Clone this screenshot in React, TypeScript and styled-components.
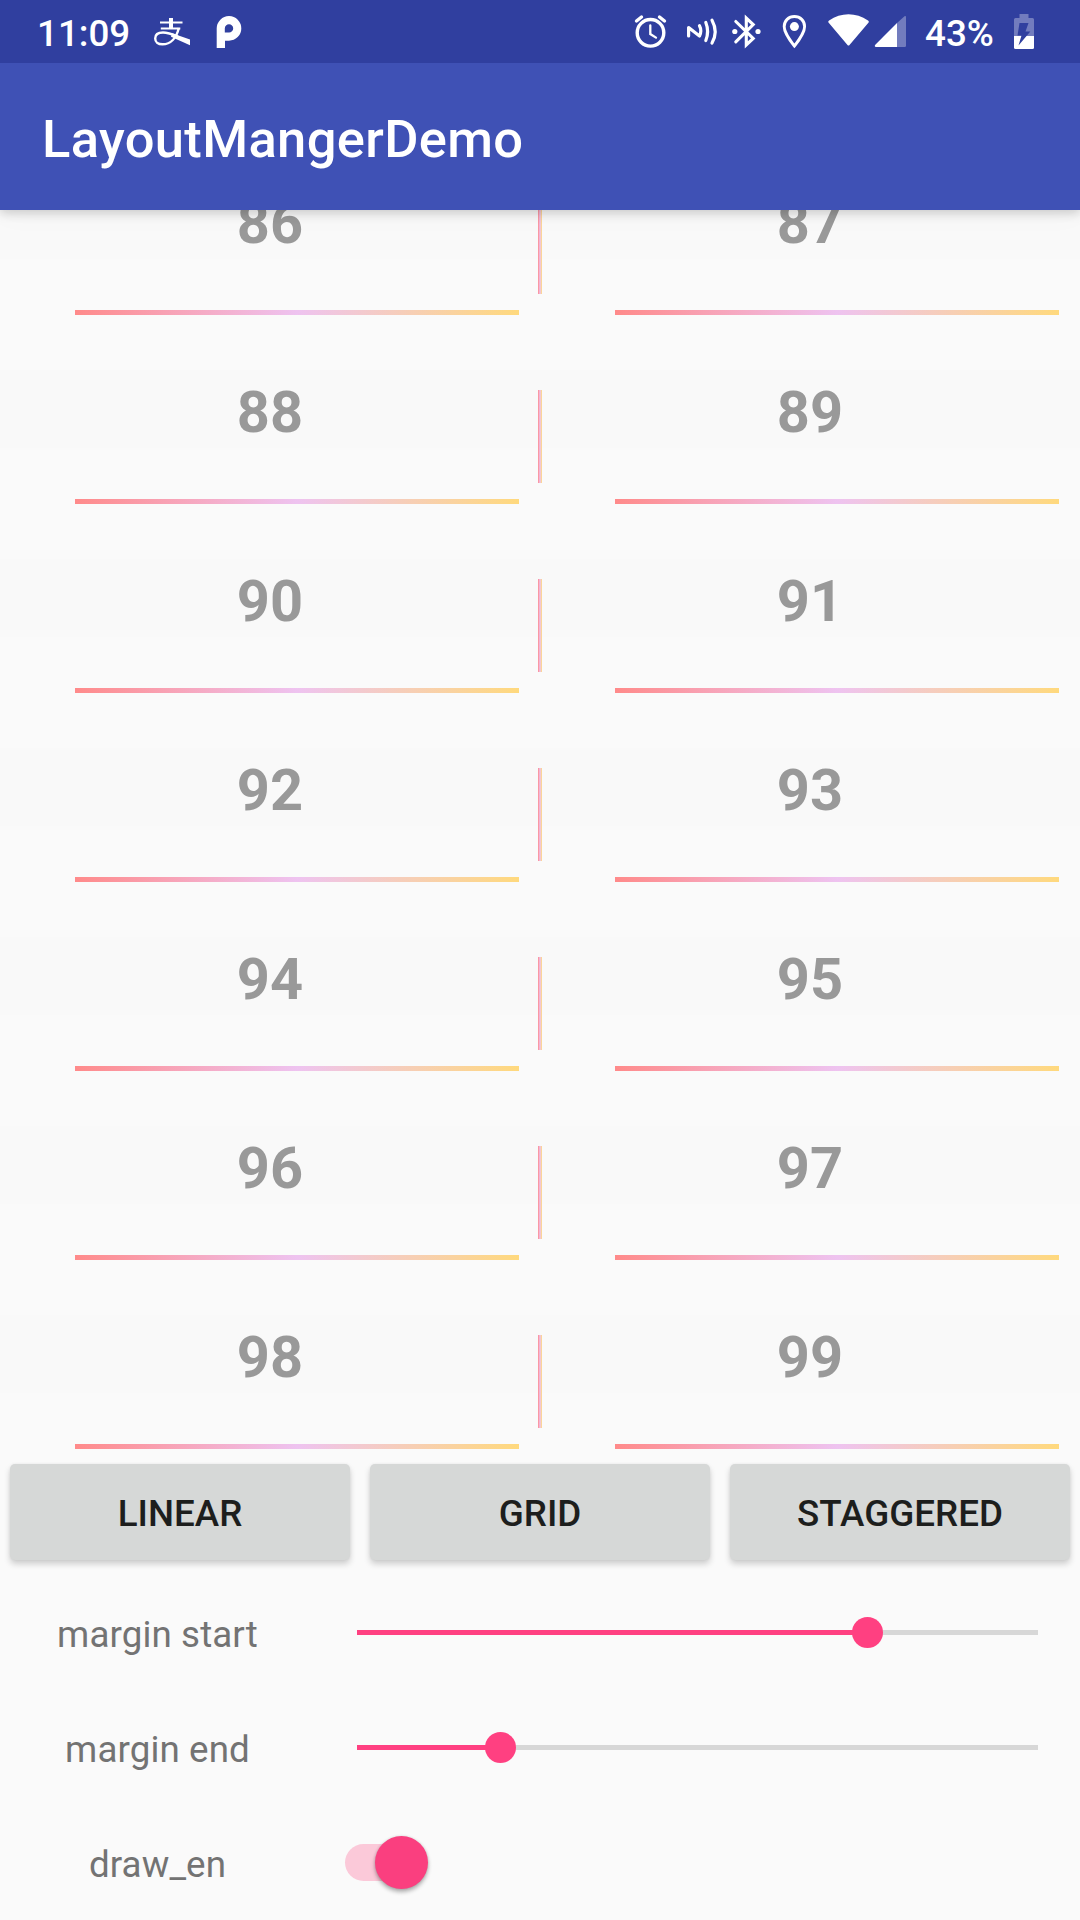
import React, { useState } from 'react';
import styled, { createGlobalStyle } from 'styled-components';

const GlobalStyle = createGlobalStyle`
  * { box-sizing: border-box; }
  body {
    margin: 0;
    background: #fafafa;
    font-family: Roboto, 'Liberation Sans', sans-serif;
  }
`;

const Screen = styled.div`
  display: flex;
  flex-direction: column;
  width: 1080px;
  height: 1920px;
  overflow: hidden;
  background: #fafafa;
`;

const StatusBar = styled.div`
  display: flex;
  justify-content: space-between;
  flex: none;
  height: 63px;
  padding: 0 46px 0 37px;
  background: #303f9f;
  color: #fff;
  z-index: 2;
`;

const StatusGroup = styled.div`
  display: flex;
  align-items: flex-start;
`;

const StatusText = styled.span<{ $width: number; $gap?: number }>`
  width: ${(p) => p.$width}px;
  margin-left: ${(p) => p.$gap ?? 0}px;
  font-size: 36.75px;
  font-weight: 500;
  line-height: 67px;
  white-space: nowrap;
`;

const StatusIcon = styled.svg<{ $gap: number }>`
  flex: none;
  height: 63px;
  margin-left: ${(p) => p.$gap}px;
  overflow: visible;
`;

const AppBar = styled.header`
  display: flex;
  align-items: center;
  flex: none;
  height: 147px;
  padding: 5px 42px 0;
  background: #3f51b5;
  box-shadow: 0 3px 10px rgba(0, 0, 0, 0.18), 0 1px 30px rgba(0, 0, 0, 0.04);
  z-index: 1;
`;

const Title = styled.h1`
  margin: 0;
  font-size: 52.5px;
  font-weight: 500;
  line-height: 62px;
  letter-spacing: 0.35px;
  color: #fff;
`;

const List = styled.div`
  flex: none;
  height: 1244px;
  overflow: hidden;
`;

const ListRows = styled.div`
  margin-top: -84px;
`;

const ListRow = styled.div`
  display: grid;
  grid-template-columns: 538px 4px 538px;
  height: 189px;
  padding-top: 75px;
  background: linear-gradient(#fafafa 55px, #f9f9f9 55px 133px, #fafafa 133px);
`;

const Cell = styled.div<{ $side: 'left' | 'right' }>`
  display: flex;
  flex-direction: column;
  justify-content: space-between;
  padding: ${(p) => (p.$side === 'left' ? '0 19px 0 75px' : '0 21px 0 73px')};
`;

const CellNumber = styled.div<{ $side: 'left' | 'right' }>`
  margin: ${(p) => (p.$side === 'left' ? '0 -21px 0 -75px' : '0 -21px 0 -75px')};
  font-size: 57.75px;
  font-weight: 700;
  line-height: 44px;
  text-align: center;
  color: #999;
`;

const gradient = 'linear-gradient(to right, #ff8a8a, #eec3f0 50%, #ffd97d)';

const BottomLine = styled.div`
  height: 5px;
  background: ${gradient};
`;

const SideLine = styled.div`
  height: 93px;
  background: ${gradient};
`;

const ButtonBar = styled.div`
  display: flex;
  gap: 20px;
  flex: none;
  padding: 10px 10px 0;
`;

const ModeButton = styled.button`
  flex: 1;
  height: 96px;
  padding: 3px 0 0;
  border: 0;
  border-radius: 5px;
  background: #d6d8d7;
  box-shadow: 0 4px 6px rgba(0, 0, 0, 0.18), 0 0 3px rgba(0, 0, 0, 0.06);
  font: 500 36.75px/44px Roboto, 'Liberation Sans', sans-serif;
  color: #1d1e1d;
`;

const Settings = styled.div`
  display: flex;
  flex-direction: column;
  flex: none;
  padding-top: 15px;
`;

const SettingRow = styled.div`
  display: grid;
  grid-template-columns: 315px 1fr;
  align-items: center;
  height: 115px;
`;

const Label = styled.span`
  padding-top: 4px;
  font-size: 36.75px;
  line-height: 44px;
  letter-spacing: 0.1px;
  text-align: center;
  color: #737373;
`;

const Slider = styled.div`
  position: relative;
  height: 5px;
  margin: 0 42px;
  background: #d7d7d7;
`;

const SliderFill = styled.div`
  height: 100%;
  background: #ff4081;
`;

const SliderThumb = styled.div`
  position: absolute;
  top: -13px;
  width: 31px;
  height: 31px;
  margin-left: -15.5px;
  border-radius: 50%;
  background: #ff4081;
`;

const Switch = styled.button<{ $on: boolean }>`
  display: flex;
  align-items: center;
  justify-content: ${(p) => (p.$on ? 'flex-end' : 'flex-start')};
  width: 75px;
  height: 37px;
  margin-left: 30px;
  padding: 0;
  border: 0;
  border-radius: 19px;
  background: ${(p) => (p.$on ? '#fbc9d9' : '#c4c4c4')};
`;

const SwitchThumb = styled.span`
  width: 53px;
  height: 53px;
  margin: 0 -8px;
  flex: none;
  border-radius: 50%;
  background: #fa3f7f;
  box-shadow: 0 3px 4px rgba(0, 0, 0, 0.3), 0 0 3px rgba(0, 0, 0, 0.12);
`;

const rows = [86, 88, 90, 92, 94, 96, 98];

function NotificationIcons() {
  return (
    <>
      <StatusIcon $gap={25} width="36" viewBox="154 0 36 63" fill="none" stroke="#fff">
        <path d="M160 22.500h22.500M160.800 28.500h19.500" strokeWidth="2.200" />
        <path d="M171 18v11" strokeWidth="4" />
        <path
          d="M178.800 28C176.500 38 170.500 44.300 162.500 44.300C158 44.300 155.200 42 155.200 38.500C155.200 34.500 158.500 32.500 163 32.500C168 32.500 173 34.500 178 36.500"
          strokeWidth="2.400"
        />
        <path d="M172 33.300L190 39.600V45.200L171 36.700Z" fill="#fff" stroke="none" />
      </StatusIcon>
      <StatusIcon $gap={27} width="25" viewBox="217 0 25 63">
        <path
          fill="#fff"
          fillRule="evenodd"
          d="M216.700 28.300A12.300 12.300 0 1 1 229 40.700H225V48H216.700ZM224.800 32.600H229A4.200 4.200 0 1 0 224.800 28.400Z"
        />
      </StatusIcon>
    </>
  );
}

function SystemIcons() {
  return (
    <>
      <StatusIcon $gap={0} width="32" viewBox="635 0 32 63" fill="none" stroke="#fff" strokeLinecap="round">
        <circle cx="650.500" cy="32.800" r="13.300" strokeWidth="3.400" />
        <path d="M636.500 21L641.500 17M664.500 21L659.500 17" strokeWidth="3.400" />
        <path d="M650.300 25.500V34L656 37.600" strokeWidth="2.300" />
      </StatusIcon>
      <StatusIcon
        $gap={20}
        width="30"
        viewBox="687 0 30 63"
        fill="none"
        stroke="#fff"
        strokeWidth="3.200"
        strokeLinecap="round"
        strokeLinejoin="round"
      >
        <path d="M688.600 36V27.500L699.500 36C701.200 32.500 701.200 29 699.500 25.700" />
        <path d="M705.800 22.500C708.200 28.500 708.200 34.500 705.800 40.500" />
        <path d="M712 20.200C716.300 28 716.300 35.500 712 43" />
      </StatusIcon>
      <StatusIcon $gap={15} width="29" viewBox="732 0 29 63" fill="none" stroke="#fff" strokeWidth="3.100">
        <path d="M735.800 21.500L753.200 38.500L746.300 45V18L753.200 24.500L735.800 41.800" strokeLinecap="round" />
        <circle cx="734.800" cy="31.500" r="2.600" fill="#fff" stroke="none" />
        <circle cx="758" cy="31.500" r="2.600" fill="#fff" stroke="none" />
      </StatusIcon>
      <StatusIcon $gap={22} width="23" viewBox="783 0 23 63">
        <path
          d="M794.400 16.500C788.500 16.500 784.200 20.800 784.200 26.500C784.200 33.500 794.400 46 794.400 46C794.400 46 804.600 33.500 804.600 26.500C804.600 20.800 800.300 16.500 794.400 16.500Z"
          fill="none"
          stroke="#fff"
          strokeWidth="2.900"
        />
        <circle cx="794.400" cy="26.600" r="4.500" fill="#fff" />
      </StatusIcon>
      <StatusIcon $gap={22} width="41" viewBox="828 0 41 63">
        <path
          d="M828.700 22.800C828 21.900 828.200 21 829.100 20.400C841 12.200 856 12.200 868 20.400C868.900 21 869.100 21.900 868.400 22.800L849.500 45C848.900 45.700 848.100 45.700 847.500 45Z"
          fill="#fff"
        />
      </StatusIcon>
      <StatusIcon $gap={6} width="31" viewBox="875 0 31 63">
        <path
          d="M897 23V47H904.700Q906 47 906 45.700V17.200Q906 15.300 904.500 16.300Z"
          fill="#fff"
          fillOpacity="0.320"
        />
        <path d="M897 23V47H876Q874 46.500 875.300 44.700Z" fill="#fff" />
      </StatusIcon>
    </>
  );
}

function BatteryIcon() {
  return (
    <StatusIcon $gap={21} width="20" viewBox="1014 0 20 63">
      <path
        d="M1019.500 14H1028.500V18H1032.500Q1034 18 1034 19.500V36H1014V19.500Q1014 18 1015.500 18H1019.500Z"
        fill="#fff"
        fillOpacity="0.320"
      />
      <path d="M1014 36H1034V47.500Q1034 49 1032.500 49H1015.500Q1014 49 1014 47.500Z" fill="#fff" />
      <path d="M1019.500 23H1028.500L1025.500 31.500H1030.300L1018.500 45.500L1021.500 35.500H1017.500Z" fill="#303f9f" />
    </StatusIcon>
  );
}

function SliderSetting({ label, value }: { label: string; value: number }) {
  return (
    <SettingRow>
      <Label>{label}</Label>
      <Slider role="slider" aria-valuenow={Math.round(value)} aria-label={label}>
        <SliderFill style={{ width: `${value}%` }} />
        <SliderThumb style={{ left: `${value}%` }} />
      </Slider>
    </SettingRow>
  );
}

export default function App() {
  const [drawEnd, setDrawEnd] = useState(true);

  return (
    <Screen>
      <GlobalStyle />
      <StatusBar>
        <StatusGroup>
          <StatusText $width={92}>11:09</StatusText>
          <NotificationIcons />
        </StatusGroup>
        <StatusGroup>
          <SystemIcons />
          <StatusText $width={68} $gap={19}>43%</StatusText>
          <BatteryIcon />
        </StatusGroup>
      </StatusBar>
      <AppBar>
        <Title>LayoutMangerDemo</Title>
      </AppBar>
      <List>
        <ListRows>
          {rows.map((n) => (
            <ListRow key={n}>
              <Cell $side="left">
                <CellNumber $side="left">{n}</CellNumber>
                <BottomLine />
              </Cell>
              <SideLine />
              <Cell $side="right">
                <CellNumber $side="right">{n + 1}</CellNumber>
                <BottomLine />
              </Cell>
            </ListRow>
          ))}
        </ListRows>
      </List>
      <ButtonBar>
        <ModeButton>LINEAR</ModeButton>
        <ModeButton>GRID</ModeButton>
        <ModeButton>STAGGERED</ModeButton>
      </ButtonBar>
      <Settings>
        <SliderSetting label="margin start" value={75} />
        <SliderSetting label="margin end" value={21} />
        <SettingRow>
          <Label>draw_en</Label>
          <Switch $on={drawEnd} onClick={() => setDrawEnd(!drawEnd)} aria-label="draw_en">
            <SwitchThumb />
          </Switch>
        </SettingRow>
      </Settings>
    </Screen>
  );
}
